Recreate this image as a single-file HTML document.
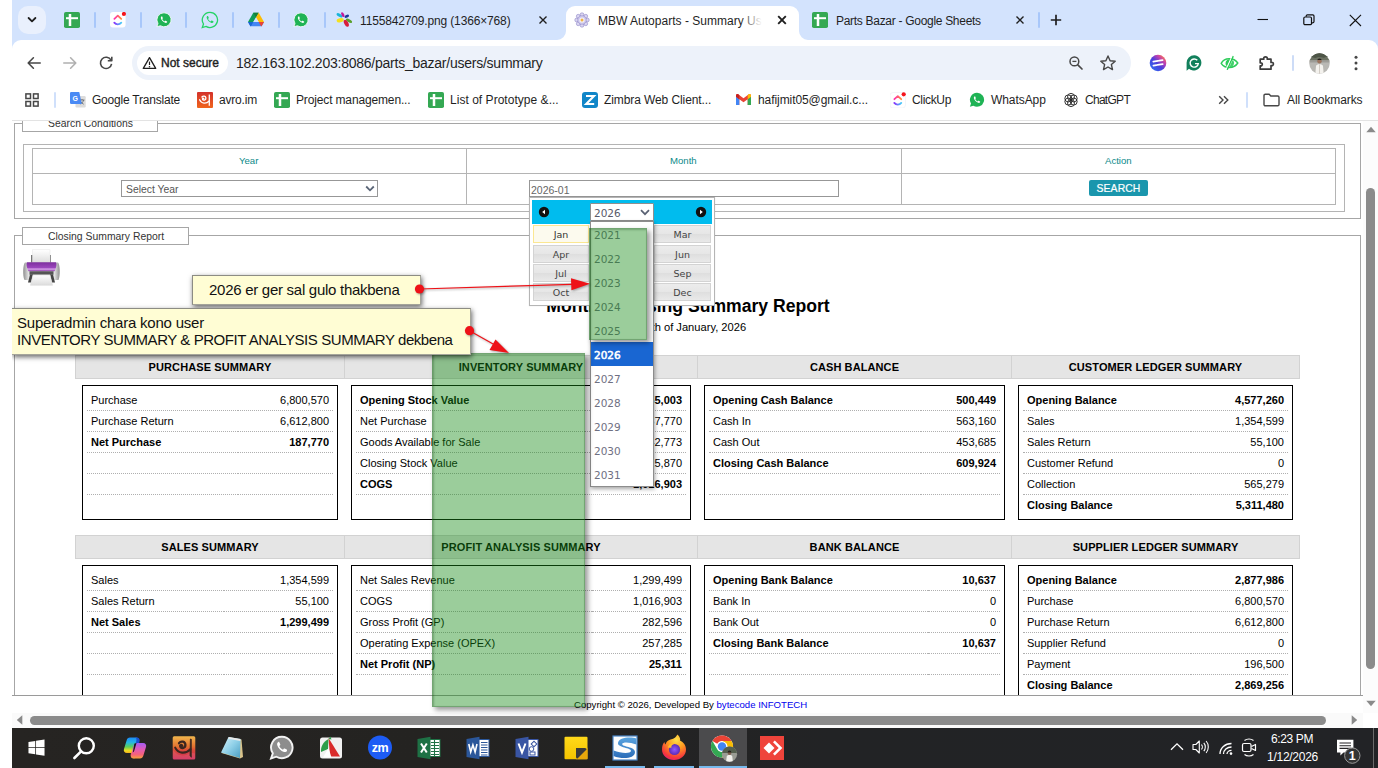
<!DOCTYPE html>
<html lang="en">
<head>
<meta charset="utf-8">
<title>MBW Autoparts - Summary</title>
<style>
*{box-sizing:border-box;margin:0;padding:0}
html,body{width:1378px;height:768px;overflow:hidden;background:#fff}
body{position:relative;font-family:"Liberation Sans",Arial,sans-serif;color:#000}
.a{position:absolute}
.t{position:absolute;white-space:nowrap;line-height:1}
/* ---------- browser chrome ---------- */
#tabbar{left:12px;top:0;width:1366px;height:52px;background:#d3e3fd}
#toolbar{left:12px;top:40px;width:1366px;height:80px;background:#fff;border-radius:9px 9px 0 0}
#chromeline{left:12px;top:120px;width:1366px;height:1px;background:#e3e3e3}
.ui{font-family:"Liberation Sans",Arial,sans-serif;color:#1f1f1f}
.tsep{position:absolute;top:12px;width:2px;height:16px;background:#a8c7fa;border-radius:1px}
.bm{font-size:12px;color:#1f1f1f;top:94px}
/* ---------- page ---------- */
.fs{border:1px solid #a6a6a6;position:absolute}
.lg{position:absolute;border:1px solid #a6a6a6;background:#fff;font-size:9.5px;color:#333}
.tb{position:absolute;border:1px solid #b4b4b4}
.teal{color:#0c8a8a;font-size:9.6px}
/* summary */
.sh{position:absolute;height:24px;background:#e5e5e5;border:1px solid #d2d2d2;font-weight:bold;font-size:11px;text-align:center;line-height:22px;letter-spacing:.1px;color:#000}
.bx{position:absolute;border:1px solid #000;background:#fff;padding:4px}
.bx table{border-collapse:separate;border-spacing:0;width:100%;font-size:11px}
.bx td{height:21px;padding:0 4px 0 4px;border-bottom:1px dotted #afafaf;vertical-align:middle}
.bx tr:last-child td{border-bottom-color:transparent}
.bx td:last-child{text-align:right}
.bx tr.b td{font-weight:bold}
/* datepicker */
.mb{position:absolute;width:56px;height:18px;border:1px solid #d3d3d3;background:linear-gradient(#ececec 0%,#e6e6e6 50%,#dedede 51%,#e9e9e9 100%);font-family:"DejaVu Sans",Verdana,sans-serif;font-size:9.5px;color:#444;text-align:center;line-height:17px}
.yo{position:absolute;left:3px;font-family:"DejaVu Sans",Verdana,sans-serif;font-size:10.5px;color:#6f7082;line-height:1}
/* taskbar */
#taskbar{left:12px;top:728px;width:1366px;height:40px;background:#201f1e}
</style>
</head>
<body>
<!-- ======= TAB BAR ======= -->
<div id="tabbar" class="a"></div>
<div id="toolbar" class="a"></div>
<div id="chromeline" class="a"></div>
<!--TABS-->
<!-- tab search button -->
<div class="a" style="left:18px;top:6px;width:28px;height:28px;border-radius:10px;background:#e9f0fd"></div>
<svg class="a" style="left:26px;top:15px" width="12" height="10" viewBox="0 0 12 10"><path d="M2.6 3 L6 6.4 L9.4 3" fill="none" stroke="#1f1f1f" stroke-width="1.8" stroke-linecap="round" stroke-linejoin="round"/></svg>
<!-- pinned: sheets -->
<svg class="a" style="left:64px;top:12px" width="16" height="16" viewBox="0 0 16 16"><rect x="0" y="0" width="16" height="16" rx="1.800" fill="#34a853"/><path d="M6 2 V14" stroke="#fff" stroke-width="2.500" fill="none"/><path d="M2 6.200 H14" stroke="#fff" stroke-width="2" fill="none"/></svg>
<div class="tsep" style="left:94px"></div>
<!-- clickup -->
<svg class="a" style="left:110px;top:12px" width="16" height="16" viewBox="0 0 16 16"><defs><linearGradient id="cu1" x1="0" y1="0" x2="1" y2="0"><stop offset="0" stop-color="#ff2fb0"/><stop offset="1" stop-color="#ff8a3c"/></linearGradient><linearGradient id="cu2" x1="0" y1="0" x2="1" y2="0"><stop offset="0" stop-color="#8930fd"/><stop offset="1" stop-color="#49ccf9"/></linearGradient></defs><rect width="15.600" height="15.600" rx="3" fill="#fff"/><path d="M4.300 10.600 C6.200 12.900 9.400 12.900 11.300 10.600" fill="none" stroke="url(#cu2)" stroke-width="1.800" stroke-linecap="round"/><path d="M4.400 6.800 L7.800 3.700 L11.200 6.800" fill="none" stroke="url(#cu1)" stroke-width="1.800" stroke-linecap="round" stroke-linejoin="round"/><circle cx="13.900" cy="2" r="2.100" fill="#f5141c"/></svg>
<div class="tsep" style="left:140px"></div>
<!-- whatsapp filled -->
<svg class="a" style="left:156px;top:12px" width="16" height="16" viewBox="0 0 16 16"><path d="M8 .8 A7 7 0 1 1 4.3 13.7 L.9 14.8 L2 11.5 A7 7 0 0 1 8 .8Z" fill="#1fb355" stroke="#fff" stroke-width=".8"/><path d="M5.6 4.4 c-.5.3-.9 1-.7 1.9 .5 2 2.300 3.800 4.300 4.500 .8.300 1.600-.1 1.900-.6 .2-.4.1-.7-.1-.8 l-1.300-.7 c-.3-.1-.5 0-.7.200 l-.4.500 c-1-.4-1.900-1.300-2.400-2.300 l.5-.5 c.2-.2.200-.4.100-.7 l-.6-1.300 c-.1-.2-.4-.3-.6-.2z" fill="#fff"/></svg>
<div class="tsep" style="left:185px"></div>
<!-- whatsapp outline -->
<svg class="a" style="left:201px;top:11px" width="18" height="18" viewBox="0 0 18 18"><path d="M9 1.300 A7.600 7.600 0 1 1 5 15.400 L1.300 16.600 L2.500 13 A7.600 7.600 0 0 1 9 1.300Z" fill="none" stroke="#25d366" stroke-width="1.300"/><path d="M6.400 5 c-.5.300-.9 1.100-.7 2 .6 2.200 2.500 4.100 4.700 4.900 .9.300 1.700-.1 2-.7 .2-.4.100-.8-.1-.9 l-1.400-.7 c-.3-.1-.5 0-.7.200 l-.5.600 c-1.100-.5-2.100-1.400-2.600-2.500 l.5-.6 c.2-.2.200-.5.100-.7 l-.6-1.400 c-.1-.3-.4-.3-.7-.2z" fill="#25d366"/></svg>
<div class="tsep" style="left:232px"></div>
<!-- drive -->
<svg class="a" style="left:248px;top:12px" width="16" height="15" viewBox="0 0 16 15"><path d="M5.300 .8 H10.700 L8 5.500 L5.300 10.100 H0Z" fill="#0f9d58"/><path d="M5.300 .8 L8 5.500 L10.700 .8Z" fill="#188038"/><path d="M10.700 .8 L16 10.100 H10.700 L8 5.500Z" fill="#fbbc04"/><path d="M0 10.100 H16 L13.600 14.200 H2.400Z" fill="#4285f4"/><path d="M0 10.100 H5.300 L2.900 14.200 H2.400Z" fill="#1967d2"/><path d="M10.700 10.100 H16 L13.600 14.200 H13.100Z" fill="#ea4335"/><path d="M8 5.500 L5.300 10.100 H10.700Z" fill="#d3e3fd"/></svg>
<div class="tsep" style="left:278px"></div>
<!-- whatsapp filled 2 -->
<svg class="a" style="left:293px;top:12px" width="16" height="16" viewBox="0 0 16 16"><path d="M8 .8 A7 7 0 1 1 4.3 13.7 L.9 14.800 L2 11.500 A7 7 0 0 1 8 .8Z" fill="#1fb355" stroke="#fff" stroke-width=".8"/><path d="M5.600 4.400 c-.5.300-.9 1-.7 1.900 .5 2 2.300 3.800 4.300 4.500 .8.300 1.600-.1 1.900-.6 .2-.4.100-.7-.1-.8 l-1.300-.7 c-.3-.1-.5 0-.7.200 l-.4.500 c-1-.4-1.900-1.300-2.400-2.300 l.5-.5 c.2-.2.200-.4.100-.7 l-.6-1.300 c-.1-.2-.4-.3-.6-.2z" fill="#fff"/></svg>
<div class="tsep" style="left:324px"></div>
<!-- image tab -->
<svg class="a" style="left:336px;top:12px" width="17" height="16" viewBox="0 0 17 16"><ellipse cx="3.500" cy="3.300" rx="3.300" ry="1.500" transform="rotate(30 3.500 3.300)" fill="#19b5d8"/><ellipse cx="6.800" cy="2.600" rx="2.600" ry="1.300" transform="rotate(65 6.800 2.600)" fill="#c2189a"/><ellipse cx="10.800" cy="4.300" rx="2.400" ry="1.400" transform="rotate(-25 10.800 4.300)" fill="#1b3a9a"/><ellipse cx="4.200" cy="8.200" rx="3.600" ry="2.100" transform="rotate(-12 4.200 8.200)" fill="#f5e11c"/><ellipse cx="13" cy="8.800" rx="3.400" ry="1.500" transform="rotate(30 13 8.800)" fill="#5aa02c"/><ellipse cx="10.300" cy="11.300" rx="3.800" ry="2" transform="rotate(62 10.300 11.300)" fill="#d81e3c"/></svg>
<span id="tt1" class="t ui" style="left:360px;top:14.5px;letter-spacing:-0.151px;font-size:12.0px">1155842709.png (1366×768)</span>
<svg class="a" style="left:538px;top:15px" width="10" height="10" viewBox="0 0 10 10"><path d="M1.500 1.500 L8.500 8.500 M8.500 1.500 L1.500 8.500" stroke="#1f1f1f" stroke-width="1.400" fill="none"/></svg>
<!-- active tab -->
<div class="a" style="left:566px;top:6px;width:233px;height:34px;background:#fff;border-radius:9px 9px 0 0"></div>
<svg class="a" style="left:557px;top:31px" width="9" height="9" viewBox="0 0 9 9"><path d="M9 0 V9 H0 A9 9 0 0 0 9 0Z" fill="#fff"/></svg>
<svg class="a" style="left:799px;top:31px" width="9" height="9" viewBox="0 0 9 9"><path d="M0 0 V9 H9 A9 9 0 0 1 0 0Z" fill="#fff"/></svg>
<svg class="a" style="left:574px;top:12px" width="16" height="16" viewBox="0 0 16 16"><g fill="#d9d5f0" stroke="#8f87c7" stroke-width=".6"><circle cx="8" cy="2.700" r="1.900"/><circle cx="8" cy="13.300" r="1.900"/><circle cx="2.700" cy="8" r="1.900"/><circle cx="13.300" cy="8" r="1.900"/><circle cx="4.250" cy="4.250" r="1.900"/><circle cx="11.750" cy="4.250" r="1.900"/><circle cx="4.250" cy="11.750" r="1.900"/><circle cx="11.750" cy="11.750" r="1.900"/></g><circle cx="8" cy="8" r="4.300" fill="#cfcaec" stroke="#9a92cf" stroke-width=".6"/><circle cx="8" cy="8" r="2.600" fill="#f3f1fb"/><circle cx="8" cy="8" r="1.500" fill="#f0b445"/></svg>
<div class="a" style="left:598px;top:10px;width:168px;height:20px;overflow:hidden"><span id="tt2" class="t ui" style="left:0;top:4.5px;letter-spacing:0.016px;font-size:12.0px">MBW Autoparts - Summary User</span><div class="a" style="right:0;top:0;width:26px;height:20px;background:linear-gradient(90deg,rgba(255,255,255,0),#fff 85%)"></div></div>
<svg class="a" style="left:777px;top:15px" width="10" height="10" viewBox="0 0 10 10"><path d="M1.200 1.200 L8.800 8.800 M8.800 1.200 L1.200 8.800" stroke="#1f1f1f" stroke-width="1.900" fill="none"/></svg>
<!-- sheets tab -->
<svg class="a" style="left:812px;top:12px" width="16" height="16" viewBox="0 0 16 16"><rect x="0" y="0" width="16" height="16" rx="1.800" fill="#34a853"/><path d="M6 2 V14" stroke="#fff" stroke-width="2.500" fill="none"/><path d="M2 6.200 H14" stroke="#fff" stroke-width="2" fill="none"/></svg>
<span id="tt3" class="t ui" style="left:836px;top:14.5px;letter-spacing:-0.296px;font-size:12.0px">Parts Bazar - Google Sheets</span>
<svg class="a" style="left:1015px;top:15px" width="10" height="10" viewBox="0 0 10 10"><path d="M1.500 1.500 L8.500 8.500 M8.500 1.500 L1.500 8.500" stroke="#1f1f1f" stroke-width="1.400" fill="none"/></svg>
<div class="tsep" style="left:1038px"></div>
<svg class="a" style="left:1050px;top:14px" width="12" height="12" viewBox="0 0 12 12"><path d="M6 .8 V11.200 M.8 6 H11.200" stroke="#1f1f1f" stroke-width="1.700" fill="none"/></svg>
<!-- window controls -->
<svg class="a" style="left:1257px;top:14px" width="12" height="12" viewBox="0 0 12 12"><path d="M.5 5.500 H11" stroke="#111" stroke-width="1.100"/></svg>
<svg class="a" style="left:1303px;top:14px" width="12" height="12" viewBox="0 0 12 12"><rect x=".8" y="3" width="7.700" height="7.700" rx="1.300" fill="none" stroke="#111" stroke-width="1.200"/><path d="M3.200 2.800 V2 a1.200 1.200 0 0 1 1.200-1.200 H9.800 a1.200 1.200 0 0 1 1.200 1.200 V7.600 a1.200 1.200 0 0 1-1.200 1.200 H8.900" fill="none" stroke="#111" stroke-width="1.200"/></svg>
<svg class="a" style="left:1349px;top:14px" width="13" height="13" viewBox="0 0 13 13"><path d="M.8 .8 L12 12 M12 .8 L.8 12" stroke="#111" stroke-width="1.100" fill="none"/></svg>
<!--/TABS-->
<!--TOOL-->
<!-- nav buttons -->
<svg class="a" style="left:26px;top:55px" width="16" height="16" viewBox="0 0 16 16"><path d="M14.200 8 H2.400 M7.400 2.800 L2.200 8 L7.400 13.200" fill="none" stroke="#474747" stroke-width="1.600" stroke-linecap="round" stroke-linejoin="round"/></svg>
<svg class="a" style="left:62px;top:55px" width="16" height="16" viewBox="0 0 16 16"><path d="M1.800 8 H13.600 M8.600 2.800 L13.800 8 L8.600 13.200" fill="none" stroke="#b0b0b0" stroke-width="1.600" stroke-linecap="round" stroke-linejoin="round"/></svg>
<svg class="a" style="left:98px;top:55px" width="16" height="16" viewBox="0 0 16 16"><path d="M13 5.200 A5.600 5.600 0 1 0 13.600 8.800" fill="none" stroke="#474747" stroke-width="1.600"/><path d="M13.800 1.800 V5.800 H9.800" fill="none" stroke="#474747" stroke-width="1.600" stroke-linejoin="round"/></svg>
<!-- omnibox -->
<div class="a" style="left:132px;top:46px;width:999px;height:34px;border-radius:17px;background:#edf2fa"></div>
<div class="a" style="left:137px;top:51px;width:91px;height:24px;border-radius:12px;background:#fff"></div>
<svg class="a" style="left:142px;top:56px" width="15" height="14" viewBox="0 0 15 14"><path d="M7.500 1.600 L13.700 12.400 H1.300Z" fill="none" stroke="#1f1f1f" stroke-width="1.300" stroke-linejoin="round"/><path d="M7.500 5.600 V9" stroke="#1f1f1f" stroke-width="1.200"/><circle cx="7.500" cy="10.700" r=".8" fill="#1f1f1f"/></svg>
<span id="ns" class="t ui" style="left:161px;top:57px;font-weight:normal;-webkit-text-stroke:.4px #1f1f1f;color:#1f1f1f;letter-spacing:-0.003px;font-size:12.0px">Not secure</span>
<span id="url" class="t ui" style="left:236px;top:56px;color:#1f1f1f;letter-spacing:-0.24px;font-size:14.0px">182.163.102.203:8086/parts_bazar/users/summary</span>
<svg class="a" style="left:1068px;top:55px" width="16" height="16" viewBox="0 0 16 16"><circle cx="6.400" cy="6.400" r="4.400" fill="none" stroke="#474747" stroke-width="1.500"/><path d="M9.800 9.800 L14 14" stroke="#474747" stroke-width="1.700" stroke-linecap="round"/><path d="M4.400 6.400 H8.400" stroke="#474747" stroke-width="1.300"/></svg>
<svg class="a" style="left:1099px;top:54px" width="18" height="18" viewBox="0 0 18 18"><path d="M9 2 L11.100 6.700 L16.200 7.200 L12.400 10.600 L13.500 15.600 L9 13 L4.500 15.600 L5.600 10.600 L1.800 7.200 L6.900 6.700Z" fill="none" stroke="#474747" stroke-width="1.400" stroke-linejoin="round"/></svg>
<!-- extensions -->
<svg class="a" style="left:1149px;top:54px" width="18" height="18" viewBox="0 0 18 18"><defs><linearGradient id="g1" x1=".1" y1=".9" x2=".9" y2=".1"><stop offset="0" stop-color="#2f6af0"/><stop offset=".45" stop-color="#4a3fdc"/><stop offset=".75" stop-color="#c040b0"/><stop offset="1" stop-color="#ff7a4a"/></linearGradient></defs><circle cx="9" cy="9" r="8.300" fill="url(#g1)"/><path d="M4.300 7.600 L9 6.900 M10.200 6.700 L13.600 6.200 M4.400 11.600 L7.400 11.100 M8.600 10.900 L13.700 10.100" stroke="#fff" stroke-width="1.700" stroke-linecap="round"/></svg>
<svg class="a" style="left:1185px;top:54px" width="18" height="18" viewBox="0 0 18 18"><path d="M9.300 1.200 A7.600 7.600 0 1 1 4 14.700 L1.600 16.700 V9 A7.600 7.600 0 0 1 9.300 1.200Z" fill="#12805c"/><path d="M12.300 6.300 A4.100 4.100 0 1 0 13.300 9.600 H10" fill="none" stroke="#fff" stroke-width="1.400"/></svg>
<svg class="a" style="left:1220px;top:54px" width="19" height="18" viewBox="0 0 19 18"><path d="M1.200 9.300 C4.500 3.600 13.500 3.200 17.800 9 C14 14.800 5 15 1.200 9.300Z" fill="#fff" stroke="#2ecc5a" stroke-width="1.500" stroke-linejoin="round"/><path d="M5.500 9.200 A4 4 0 0 1 10.500 5.300 L7.200 12.600 A4 4 0 0 1 5.500 9.200Z" fill="#2ecc5a"/><path d="M12.600 6 A4 4 0 0 1 9.500 13 Z" fill="#2ecc5a" opacity=".9"/><path d="M13 2.600 L7.400 15.200" stroke="#2ecc5a" stroke-width="1.500" stroke-linecap="round"/><path d="M11.800 2.400 L6.200 15" stroke="#fff" stroke-width="1"/></svg>
<svg class="a" style="left:1258px;top:54px" width="18" height="18" viewBox="0 0 18 18"><path d="M2.200 5.200 H5.800 C5 2 10 2 9.200 5.200 H13 V8.400 C16.200 7.600 16.200 12.400 13 11.600 V15.200 H2.200 V11.800 C5 12.500 5 8.200 2.200 8.900Z" fill="none" stroke="#3c3c3c" stroke-width="1.700" stroke-linejoin="round"/></svg>
<div class="a" style="left:1292px;top:55px;width:2px;height:16px;background:#cddcf7;border-radius:1px"></div>
<svg class="a" style="left:1309px;top:53px" width="21" height="21" viewBox="0 0 21 21"><defs><clipPath id="cpa"><circle cx="10.500" cy="10.500" r="10.200"/></clipPath></defs><g clip-path="url(#cpa)"><rect width="21" height="21" fill="#b9b8b4"/><rect y="0" width="21" height="7.500" fill="#6c7263"/><path d="M0 5 C3 3 5 6 8 4.500 C11 3 14 6 17 4 C19 3 20 5 21 4.500 V0 H0Z" fill="#4d5547"/><rect y="7.500" width="21" height="2" fill="#9d9c97"/><path d="M6.300 21 L7 13 C7.400 10.800 13.600 10.800 14 13 L14.700 21Z" fill="#f4f2ee"/><path d="M10.500 11.500 V21" stroke="#c9c3bb" stroke-width=".8"/><circle cx="10.500" cy="8.300" r="2.200" fill="#9a7560"/><path d="M8.200 7.900 a2.300 2.300 0 0 1 4.600 0 l-.4-.9 h-3.800z" fill="#231f1c"/></g></svg>
<svg class="a" style="left:1353px;top:54px" width="6" height="18" viewBox="0 0 6 18"><circle cx="3" cy="3.200" r="1.500" fill="#474747"/><circle cx="3" cy="9" r="1.500" fill="#474747"/><circle cx="3" cy="14.800" r="1.500" fill="#474747"/></svg>

<!-- bookmarks bar -->
<svg class="a" style="left:25px;top:93px" width="14" height="14" viewBox="0 0 14 14"><g fill="none" stroke="#474747" stroke-width="1.500"><rect x=".9" y=".9" width="4.600" height="4.600"/><rect x="8.500" y=".9" width="4.600" height="4.600"/><rect x=".9" y="8.500" width="4.600" height="4.600"/><rect x="8.500" y="8.500" width="4.600" height="4.600"/></g></svg>
<div class="a" style="left:54px;top:92px;width:2px;height:16px;background:#d0e0fb;border-radius:1px"></div>
<!-- google translate -->
<svg class="a" style="left:70px;top:92px" width="16" height="16" viewBox="0 0 16 16"><rect x="5.500" y="4" width="10.200" height="11.500" rx="1.200" fill="#dcdcdc"/><path d="M9.500 8 h5 M12 7 v1 M10.300 12 c2-1 3-2.500 3.300-4 M10.800 9.500 c.6 1.200 1.600 2.100 2.900 2.700" stroke="#5f6368" stroke-width=".8" fill="none"/><path d="M1.200 0 H9.300 L11.800 12 H1.200 A1.200 1.200 0 0 1 0 10.800 V1.200 A1.200 1.200 0 0 1 1.200 0Z" fill="#4a8af4"/><text x="2.400" y="8.600" font-family="Liberation Sans,sans-serif" font-size="7" font-weight="bold" fill="#fff">G</text></svg>
<span id="b1" class="t bm" style="left:92px;letter-spacing:-0.212px;font-size:12.0px">Google Translate</span>
<!-- avro -->
<svg class="a" style="left:197px;top:92px" width="16" height="16" viewBox="0 0 16 16"><defs><linearGradient id="gav" x1="0" y1="0" x2="0" y2="1"><stop offset="0" stop-color="#d3312b"/><stop offset="1" stop-color="#f0651c"/></linearGradient></defs><rect width="16" height="16" rx="1" fill="url(#gav)"/><path d="M12.300 2.600 V13.800" fill="none" stroke="#fff" stroke-width="1.300"/><path d="M6.800 6.600 C6.100 5.800 5.100 6.500 5.600 7.400 C6.300 8.800 9.100 8.100 8.900 6 C8.800 4 6.200 3.400 4.900 5" fill="none" stroke="#fff" stroke-width="1.300" stroke-linecap="round"/><path d="M2.600 7.800 C4.400 11.800 9.200 12.300 12.200 9" fill="none" stroke="#fff" stroke-width="1.300" stroke-linecap="round"/></svg>
<span id="b2" class="t bm" style="left:219px;letter-spacing:-0.192px;font-size:12.0px">avro.im</span>
<svg class="a" style="left:274px;top:92px" width="16" height="16" viewBox="0 0 16 16"><rect x="0" y="0" width="16" height="16" rx="1.800" fill="#34a853"/><path d="M6 2 V14" stroke="#fff" stroke-width="2.500" fill="none"/><path d="M2 6.200 H14" stroke="#fff" stroke-width="2" fill="none"/></svg>
<span id="b3" class="t bm" style="left:296px;letter-spacing:-0.145px;font-size:12.0px">Project managemen...</span>
<svg class="a" style="left:428px;top:92px" width="16" height="16" viewBox="0 0 16 16"><rect x="0" y="0" width="16" height="16" rx="1.800" fill="#34a853"/><path d="M6 2 V14" stroke="#fff" stroke-width="2.500" fill="none"/><path d="M2 6.200 H14" stroke="#fff" stroke-width="2" fill="none"/></svg>
<span id="b4" class="t bm" style="left:450px;letter-spacing:0.031px;font-size:12.0px">List of Prototype &amp;...</span>
<!-- zimbra -->
<svg class="a" style="left:582px;top:92px" width="16" height="16" viewBox="0 0 16 16"><rect width="16" height="16" rx="3" fill="#1186c8"/><path d="M4 4 H12 L4.200 12 H12.200" fill="none" stroke="#fff" stroke-width="2.100" stroke-linejoin="miter"/></svg>
<span id="b5" class="t bm" style="left:604px;letter-spacing:-0.095px;font-size:12.0px">Zimbra Web Client...</span>
<!-- gmail -->
<svg class="a" style="left:736px;top:94px" width="15" height="12" viewBox="0 0 15 12"><path d="M0 1.500 V11 H3.300 V5.200 L7.500 8.300 L11.700 5.200 V11 H15 V1.500 C15 .2 13.500 -.4 12.500 .4 L7.500 4.200 L2.500 .4 C1.500 -.4 0 .2 0 1.500Z" fill="#ea4335"/><path d="M0 1.500 V11 H3.300 V5.200 L0 2.700Z" fill="#4285f4"/><path d="M15 1.500 V11 H11.700 V5.200 L15 2.700Z" fill="#34a853"/><path d="M0 1.500 V2.700 L3.300 5.200 V1 L2.500 .4 C1.500 -.4 0 .2 0 1.500Z" fill="#c5221f"/><path d="M15 1.500 V2.700 L11.700 5.200 V1 L12.500 .4 C13.500 -.4 15 .2 15 1.500Z" fill="#fbbc04"/></svg>
<span id="b6" class="t bm" style="left:758px;letter-spacing:-0.074px;font-size:12.0px">hafijmit05@gmail.c...</span>
<!-- clickup -->
<svg class="a" style="left:890px;top:92px" width="16" height="16" viewBox="0 0 16 16"><rect y=".5" width="15.500" height="15.500" rx="3" fill="#fff" stroke="#eceff5" stroke-width=".6"/><path d="M4.300 10.900 C6.200 13.200 9.400 13.200 11.300 10.900" fill="none" stroke="url(#cu2)" stroke-width="1.800" stroke-linecap="round"/><path d="M4.400 7.200 L7.800 4.100 L11.200 7.200" fill="none" stroke="url(#cu1)" stroke-width="1.800" stroke-linecap="round" stroke-linejoin="round"/><circle cx="13.700" cy="2.300" r="2.100" fill="#f5141c"/></svg>
<span id="b7" class="t bm" style="left:912px;letter-spacing:-0.335px;font-size:12.0px">ClickUp</span>
<svg class="a" style="left:969px;top:92px" width="16" height="16" viewBox="0 0 16 16"><path d="M8 .8 A7 7 0 1 1 4.300 13.700 L.9 14.800 L2 11.500 A7 7 0 0 1 8 .8Z" fill="#1fb355"/><path d="M5.600 4.400 c-.5.300-.9 1-.7 1.900 .5 2 2.300 3.800 4.300 4.500 .8.300 1.600-.1 1.900-.6 .2-.4.100-.7-.1-.8 l-1.300-.7 c-.3-.1-.5 0-.7.200 l-.4.500 c-1-.4-1.900-1.300-2.400-2.300 l.5-.5 c.2-.2.200-.4.100-.7 l-.6-1.300 c-.1-.2-.4-.3-.6-.2z" fill="#fff"/></svg>
<span id="b8" class="t bm" style="left:991px;letter-spacing:-0.076px;font-size:12.0px">WhatsApp</span>
<!-- chatgpt -->
<svg class="a" style="left:1063px;top:92px" width="16" height="16" viewBox="0 0 16 16"><g fill="none" stroke="#2b2b2b" stroke-width=".95"><circle cx="10.68" cy="9.55" r="3.500"/><circle cx="8.00" cy="11.10" r="3.500"/><circle cx="5.32" cy="9.55" r="3.500"/><circle cx="5.32" cy="6.45" r="3.500"/><circle cx="8.00" cy="4.90" r="3.500"/><circle cx="10.68" cy="6.45" r="3.500"/></g></svg>
<span id="b9" class="t bm" style="left:1085px;letter-spacing:-0.717px;font-size:12.0px">ChatGPT</span>
<svg class="a" style="left:1218px;top:95px" width="11" height="10" viewBox="0 0 11 10"><path d="M1.200 1.200 L5 5 L1.200 8.800 M6 1.200 L9.800 5 L6 8.800" fill="none" stroke="#474747" stroke-width="1.400"/></svg>
<div class="a" style="left:1246px;top:92px;width:2px;height:16px;background:#d0e0fb;border-radius:1px"></div>
<svg class="a" style="left:1263px;top:93px" width="17" height="14" viewBox="0 0 17 14"><path d="M1 2.500 A1.300 1.300 0 0 1 2.300 1.200 H6.200 L7.800 3 H14.700 A1.300 1.300 0 0 1 16 4.300 V11.500 A1.300 1.300 0 0 1 14.700 12.800 H2.300 A1.300 1.300 0 0 1 1 11.500Z" fill="none" stroke="#474747" stroke-width="1.400" stroke-linejoin="round"/></svg>
<span id="b10" class="t bm" style="left:1287px;letter-spacing:-0.091px;font-size:12.0px">All Bookmarks</span>
<!--/TOOL-->

<!-- PAGE -->
<div id="page" class="a" style="left:0;top:0;width:1378px;height:713px;clip-path:inset(121px 12px 0 12px)">
<!-- fieldset 1 -->
<div class="fs" style="left:14px;top:123px;width:1347px;height:96px"></div>
<div class="lg" style="left:22px;top:114px;width:136px;height:18px"><span id="lg1" class="t" style="left:25px;top:4px;font-size:10.4px">Search Conditions</span></div>
<div class="tb" style="left:23px;top:144px;width:1322px;height:68px"></div>
<div class="tb" style="left:32px;top:148px;width:1304px;height:57px"></div>
<div class="a" style="left:32px;top:173px;width:1304px;height:1px;background:#b4b4b4"></div>
<div class="a" style="left:466px;top:148px;width:1px;height:57px;background:#b4b4b4"></div>
<div class="a" style="left:901px;top:148px;width:1px;height:57px;background:#b4b4b4"></div>
<span class="t teal" style="left:239px;top:156px" id="th1">Year</span>
<span class="t teal" style="left:670px;top:156px" id="th2">Month</span>
<span class="t teal" style="left:1105px;top:156px" id="th3">Action</span>
<div class="a" style="left:121px;top:180px;width:257px;height:17px;border:1px solid #979797;background:#fff"><span class="t" style="left:4px;top:4px;font-size:10.4px;color:#555">Select Year</span><svg class="a" style="left:242.5px;top:3.5px" width="10" height="8" viewBox="0 0 10 8"><path d="M1.200 1.500 L5 5.300 L8.800 1.500" fill="none" stroke="#5a6577" stroke-width="1.800"/></svg></div>
<div class="a" style="left:529px;top:180px;width:310px;height:17px;border:1px solid #979797;background:#fff"><span class="t" style="left:1px;top:4px;font-size:10.5px;color:#666">2026-01</span></div>
<div class="a" style="left:1089px;top:180px;width:59px;height:16px;background:#1a96ad;border-radius:2px;color:#fff;font-size:10.4px;text-align:center;line-height:17px;letter-spacing:.1px;-webkit-text-stroke:.2px #fff">SEARCH</div>
<!-- fieldset 2 -->
<div class="fs" style="left:14px;top:235px;width:1347px;height:521px"></div>
<div class="lg" style="left:22px;top:227px;width:167px;height:18px"><span id="lg2" class="t" style="left:25px;top:4px;font-size:10.4px">Closing Summary Report</span></div>
<!-- printer -->
<svg class="a" style="left:22px;top:249px" width="39" height="38" viewBox="0 0 39 38">
<defs><linearGradient id="pp" x1="0" y1="0" x2="0" y2="1"><stop offset="0" stop-color="#7d2f9e"/><stop offset=".6" stop-color="#9b47bd"/><stop offset=".75" stop-color="#d9a5ea"/><stop offset="1" stop-color="#8a35a8"/></linearGradient>
<linearGradient id="pg" x1="0" y1="0" x2="1" y2="0"><stop offset="0" stop-color="#8e8e8e"/><stop offset=".15" stop-color="#e6e6e6"/><stop offset=".5" stop-color="#c9c9c9"/><stop offset=".85" stop-color="#e6e6e6"/><stop offset="1" stop-color="#8e8e8e"/></linearGradient>
<linearGradient id="pw" x1="0" y1="0" x2="0" y2="1"><stop offset="0" stop-color="#fff"/><stop offset="1" stop-color="#dcdcdc"/></linearGradient></defs>
<rect x="9" y="6" width="2" height="8" fill="#777"/><rect x="27" y="6" width="2" height="8" fill="#777"/>
<rect x="10.500" y=".8" width="17.500" height="13" fill="url(#pw)" stroke="#e4e4e4" stroke-width=".5"/>
<path d="M3 13.500 H36 C38 15 38.500 27 36.500 31 L31 31 L29 24 H10 L8 31 H2.500 C.5 27 1 15 3 13.500Z" fill="url(#pg)"/>
<path d="M5 13.300 H34 C35 15 34 20 32.500 22.300 H6.500 C5 20 4 15 5 13.300Z" fill="url(#pp)"/>
<rect x="7.500" y="22.300" width="24" height="3.400" fill="#555"/>
<path d="M8 25.500 H11 L9 33.500 H6Z" fill="#444"/><path d="M31 25.500 H28 L30 33.500 H33Z" fill="#444"/>
<path d="M11 26 H28 L30.500 36.300 H8.500Z" fill="url(#pw)" stroke="#d9d9d9" stroke-width=".5"/>
</svg>
<!-- title -->
<div id="ttl" class="t" style="left:388px;top:298px;width:600px;text-align:center;font-size:17.6px;font-weight:bold">Monthly Closing Summary Report</div>
<div id="sub" class="t" style="left:388px;top:322px;width:600px;text-align:center;font-size:11.15px">Month of January, 2026</div>
<!--SUMMARY-->
<div class="sh" style="left:75px;top:355px;width:270px">PURCHASE SUMMARY</div>
<div class="sh" style="left:344px;top:355px;width:354px">INVENTORY SUMMARY</div>
<div class="sh" style="left:697px;top:355px;width:315px">CASH BALANCE</div>
<div class="sh" style="left:1011px;top:355px;width:289px">CUSTOMER LEDGER SUMMARY</div>
<div class="bx" style="left:82px;top:385px;width:256px;height:135px"><table><tr><td>Purchase</td><td>6,800,570</td></tr><tr><td>Purchase Return</td><td>6,612,800</td></tr><tr class="b"><td>Net Purchase</td><td>187,770</td></tr><tr><td>&nbsp;</td><td></td></tr><tr><td>&nbsp;</td><td></td></tr><tr><td>&nbsp;</td><td></td></tr></table></div>
<div class="bx" style="left:351px;top:385px;width:340px;height:135px"><table><tr class="b"><td>Opening Stock Value</td><td>4,155,003</td></tr><tr><td>Net Purchase</td><td>187,770</td></tr><tr><td>Goods Available for Sale</td><td>4,342,773</td></tr><tr><td>Closing Stock Value</td><td>3,325,870</td></tr><tr class="b"><td>COGS</td><td>1,016,903</td></tr><tr><td>&nbsp;</td><td></td></tr></table></div>
<div class="bx" style="left:704px;top:385px;width:301px;height:135px"><table><tr class="b"><td>Opening Cash Balance</td><td>500,449</td></tr><tr><td>Cash In</td><td>563,160</td></tr><tr><td>Cash Out</td><td>453,685</td></tr><tr class="b"><td>Closing Cash Balance</td><td>609,924</td></tr><tr><td>&nbsp;</td><td></td></tr><tr><td>&nbsp;</td><td></td></tr></table></div>
<div class="bx" style="left:1018px;top:385px;width:275px;height:135px"><table><tr class="b"><td>Opening Balance</td><td>4,577,260</td></tr><tr><td>Sales</td><td>1,354,599</td></tr><tr><td>Sales Return</td><td>55,100</td></tr><tr><td>Customer Refund</td><td>0</td></tr><tr><td>Collection</td><td>565,279</td></tr><tr class="b"><td>Closing Balance</td><td>5,311,480</td></tr></table></div>
<div class="sh" style="left:75px;top:535px;width:270px">SALES SUMMARY</div>
<div class="sh" style="left:344px;top:535px;width:354px">PROFIT ANALYSIS SUMMARY</div>
<div class="sh" style="left:697px;top:535px;width:315px">BANK BALANCE</div>
<div class="sh" style="left:1011px;top:535px;width:289px">SUPPLIER LEDGER SUMMARY</div>
<div class="bx" style="left:82px;top:565px;width:256px;height:135px"><table><tr><td>Sales</td><td>1,354,599</td></tr><tr><td>Sales Return</td><td>55,100</td></tr><tr class="b"><td>Net Sales</td><td>1,299,499</td></tr><tr><td>&nbsp;</td><td></td></tr><tr><td>&nbsp;</td><td></td></tr><tr><td>&nbsp;</td><td></td></tr></table></div>
<div class="bx" style="left:351px;top:565px;width:340px;height:135px"><table><tr><td>Net Sales Revenue</td><td>1,299,499</td></tr><tr><td>COGS</td><td>1,016,903</td></tr><tr><td>Gross Profit (GP)</td><td>282,596</td></tr><tr><td>Operating Expense (OPEX)</td><td>257,285</td></tr><tr class="b"><td>Net Profit (NP)</td><td>25,311</td></tr><tr><td>&nbsp;</td><td></td></tr></table></div>
<div class="bx" style="left:704px;top:565px;width:301px;height:135px"><table><tr class="b"><td>Opening Bank Balance</td><td>10,637</td></tr><tr><td>Bank In</td><td>0</td></tr><tr><td>Bank Out</td><td>0</td></tr><tr class="b"><td>Closing Bank Balance</td><td>10,637</td></tr><tr><td>&nbsp;</td><td></td></tr><tr><td>&nbsp;</td><td></td></tr></table></div>
<div class="bx" style="left:1018px;top:565px;width:275px;height:135px"><table><tr class="b"><td>Opening Balance</td><td>2,877,986</td></tr><tr><td>Purchase</td><td>6,800,570</td></tr><tr><td>Purchase Return</td><td>6,612,800</td></tr><tr><td>Supplier Refund</td><td>0</td></tr><tr><td>Payment</td><td>196,500</td></tr><tr class="b"><td>Closing Balance</td><td>2,869,256</td></tr></table></div>
<!--/SUMMARY-->
</div>

<!--REST-->
<!-- footer (fixed) -->
<div class="a" style="left:12px;top:695px;width:1351px;height:18px;background:#fff;border-top:1px solid #9a9a9a"></div>
<div id="ft" class="t" style="left:574px;top:700px;font-size:9.6px;color:#000">Copyright © 2026, Developed By <span style="color:#0000ee">bytecode INFOTECH</span></div>
<!-- vertical scrollbar -->
<div class="a" style="left:1363px;top:121px;width:15px;height:592px;background:#fcfcfc"></div>
<svg class="a" style="left:1366px;top:126px" width="10" height="7" viewBox="0 0 10 7"><path d="M.3 6.300 L5 .8 L9.700 6.300Z" fill="#8a8a8a"/></svg>
<div class="a" style="left:1366px;top:188px;width:9px;height:481px;border-radius:4.500px;background:#8b8b8b"></div>
<svg class="a" style="left:1366px;top:700px" width="10" height="7" viewBox="0 0 10 7"><path d="M.3 .7 L5 6.200 L9.700 .7Z" fill="#8a8a8a"/></svg>
<!-- horizontal scrollbar -->
<div class="a" style="left:12px;top:713px;width:1351px;height:15px;background:#fafafa"></div>
<svg class="a" style="left:16px;top:715px" width="7" height="10" viewBox="0 0 7 10"><path d="M6.300 .3 L.8 5 L6.300 9.700Z" fill="#8a8a8a"/></svg>
<div class="a" style="left:30px;top:716px;width:1296px;height:9px;border-radius:4.500px;background:#8b8b8b"></div>
<svg class="a" style="left:1351px;top:715px" width="7" height="10" viewBox="0 0 7 10"><path d="M.7 .3 L6.200 5 L.7 9.700Z" fill="#8a8a8a"/></svg>

<!-- ======= datepicker ======= -->
<div class="a" style="left:529px;top:197px;width:186px;height:109px;background:#fff;border:1px solid #b5b5b5;box-shadow:0 0 1px rgba(0,0,0,.15)"></div>
<div class="a" style="left:532px;top:200px;width:180px;height:24px;background:#00bcee"></div>
<svg class="a" style="left:537.5px;top:205.500px" width="12" height="12" viewBox="0 0 12 12"><circle cx="6" cy="6" r="5.200" fill="#111"/><path d="M7 3.800 L4.200 6 L7 8.200Z" fill="#fff"/></svg>
<svg class="a" style="left:694.500px;top:205.500px" width="12" height="12" viewBox="0 0 12 12"><circle cx="6" cy="6" r="5.200" fill="#111"/><path d="M5 3.800 L7.800 6 L5 8.200Z" fill="#fff"/></svg>
<div class="mb" style="left:533px;top:225px;border-color:#fbe792;background:#fcfaee;color:#333">Jan</div>
<div class="mb" style="left:594px;top:225px">Feb</div>
<div class="mb" style="left:654px;top:225px;width:57px">Mar</div>
<div class="mb" style="left:533px;top:245px">Apr</div>
<div class="mb" style="left:594px;top:245px">May</div>
<div class="mb" style="left:654px;top:245px;width:57px">Jun</div>
<div class="mb" style="left:533px;top:264px">Jul</div>
<div class="mb" style="left:594px;top:264px">Aug</div>
<div class="mb" style="left:654px;top:264px;width:57px">Sep</div>
<div class="mb" style="left:533px;top:283px">Oct</div>
<div class="mb" style="left:594px;top:283px">Nov</div>
<div class="mb" style="left:654px;top:283px;width:57px">Dec</div>
<!-- year select -->
<div class="a" style="left:590px;top:203px;width:64px;height:18px;background:#fff;border:1px solid #8f8f8f;border-radius:1px"><span class="t" style="left:3px;top:4px;font-family:'DejaVu Sans',Verdana,sans-serif;font-size:10.500px;color:#5a5a6a">2026</span><svg class="a" style="left:49px;top:5px" width="10" height="7" viewBox="0 0 10 7"><path d="M1 1.200 L5 5.200 L9 1.200" fill="none" stroke="#5a6273" stroke-width="1.700"/></svg></div>
<!-- dropdown list -->
<div class="a" style="left:590px;top:221px;width:64px;height:266px;background:#fff;border:1px solid #8d8d8d;box-shadow:1px 2px 4px rgba(0,0,0,.35)">
<span class="yo" style="top:8px">2021</span>
<span class="yo" style="top:32px">2022</span>
<span class="yo" style="top:56px">2023</span>
<span class="yo" style="top:80px">2024</span>
<span class="yo" style="top:104px">2025</span>
<div class="a" style="left:0;top:120px;width:62px;height:24px;background:#1966d2"></div>
<span class="yo" style="top:128px;color:#fff;-webkit-text-stroke:.55px #fff">2026</span>
<span class="yo" style="top:152px">2027</span>
<span class="yo" style="top:176px">2028</span>
<span class="yo" style="top:200px">2029</span>
<span class="yo" style="top:224px">2030</span>
<span class="yo" style="top:248px">2031</span>
</div>

<!-- ======= annotation overlays ======= -->
<div class="a" style="left:589px;top:228px;width:58px;height:112px;background:rgba(23,139,23,.43);border:1px solid rgba(30,80,30,.32);box-shadow:3px 3px 5px rgba(0,0,0,.4),inset 1px 1px 2px rgba(20,70,20,.3)"></div>
<div class="a" style="left:432px;top:353px;width:153px;height:354px;background:rgba(23,139,23,.43);border:1px solid rgba(30,80,30,.32);box-shadow:3px 3px 5px rgba(0,0,0,.4),inset 1px 1px 2px rgba(20,70,20,.3)"></div>
<!-- callout 1 -->
<div class="a" style="left:192px;top:275px;width:229px;height:30px;background:#fffdd4;border:1px solid #8c8c84;border-bottom-color:#a5a59a;border-right-color:#a5a59a;box-shadow:1px 2px 5px rgba(0,0,0,.6)"><span id="c1" class="t" style="left:16px;top:6px;color:#111;letter-spacing:-0.275px;font-size:15.0px">2026 er ger sal gulo thakbena</span></div>
<!-- callout 2 -->
<div class="a" style="left:12px;top:308px;width:459px;height:47px;background:#fffdd4;border:1px solid #8c8c84;border-bottom-color:#a5a59a;border-right-color:#a5a59a;border-left:none;box-shadow:1px 2px 5px rgba(0,0,0,.6);clip-path:inset(-12px -12px -12px 0)"><span id="c2a" class="t" style="left:5px;top:6px;color:#111;letter-spacing:-0.216px;font-size:15.0px">Superadmin chara kono user</span><span id="c2b" class="t" style="left:5px;top:23px;color:#111;letter-spacing:-0.435px;font-size:15.0px">INVENTORY SUMMARY &amp; PROFIT ANALYSIS SUMMARY dekbena</span></div>
<!-- arrows -->
<svg class="a" style="left:400px;top:270px;filter:drop-shadow(1px 1px 1px rgba(0,0,0,.35))" width="200" height="95" viewBox="400 270 200 95">
<path d="M419.500 289 L572 284.300" stroke="#ee1218" stroke-width="1.200" fill="none"/>
<circle cx="419.500" cy="289" r="4.600" fill="#ee1218"/>
<path d="M590 283.700 L571 278.300 L571.400 290.300Z" fill="#ee1218"/>
<path d="M469.500 330.700 L494 344.600" stroke="#ee1218" stroke-width="1.200" fill="none"/>
<circle cx="469.500" cy="330.700" r="4.600" fill="#ee1218"/>
<path d="M509 353 L495.500 339.500 L489.500 350Z" fill="#ee1218"/>
</svg>
<!--/REST-->
<!-- TASKBAR -->
<!--TASK-->
<div id="taskbar" class="a" style="background:linear-gradient(90deg,#262422 0%,#242321 30%,#222325 60%,#222326 100%)"></div>
<!-- windows -->
<svg class="a" style="left:27.5px;top:739px" width="17" height="17.500" viewBox="0 0 18 18"><path d="M.5 2.900 L7.700 1.800 V8.500 H.5Z M8.500 1.650 L17.500 .3 V8.500 H8.500Z M.5 9.300 H7.700 V16 L.5 14.900Z M8.500 9.300 H17.500 V17.500 L8.500 16.150Z" fill="#fff"/></svg>
<!-- search -->
<svg class="a" style="left:72px;top:735px" width="26" height="26" viewBox="0 0 26 26"><circle cx="14.300" cy="10.800" r="7.500" fill="none" stroke="#fff" stroke-width="2.400"/><path d="M9.100 16.300 L2.400 23" stroke="#fff" stroke-width="2.600" stroke-linecap="round"/></svg>
<!-- copilot -->
<svg class="a" style="left:123px;top:736px" width="24" height="24" viewBox="0 0 24 24"><defs><linearGradient id="cpl1" x1="0" y1="0" x2="0" y2="1"><stop offset="0" stop-color="#1e8cf5"/><stop offset=".3" stop-color="#22b4e8"/><stop offset=".6" stop-color="#5ccf5a"/><stop offset=".85" stop-color="#f2dc1e"/><stop offset="1" stop-color="#f5b01e"/></linearGradient><linearGradient id="cpl2" x1="0" y1="0" x2="0" y2="1"><stop offset="0" stop-color="#a45cf5"/><stop offset=".4" stop-color="#e05ab8"/><stop offset=".75" stop-color="#f5627a"/><stop offset="1" stop-color="#f7a03c"/></linearGradient></defs>
<path d="M11.500 22.400 C9 22.400 7.500 21 7.600 19 L8.200 16 H12Z" fill="#f0602c"/>
<path d="M7 1.600 H13 C15.500 1.600 16.800 3 16 5.500 L13.500 14 C12.800 16.300 11.500 17 9.500 17 H4 C1.500 17 .3 15.300 1 13 L3.600 4.500 C4.200 2.500 5.200 1.600 7 1.600Z" fill="url(#cpl1)"/>
<path d="M12 1.600 H13 C15.500 1.600 17 3 16.600 5.200 L16 7.600 H12.600 L13.400 4.500 C13.700 3 13.300 2 12 1.600Z" fill="#1a50d2"/>
<path d="M17 22.400 H11 C8.500 22.400 7.200 21 8 18.500 L10.500 10 C11.200 7.700 12.500 7 14.500 7 H20 C22.500 7 23.700 8.700 23 11 L20.400 19.500 C19.800 21.500 18.800 22.400 17 22.400Z" fill="url(#cpl2)"/>
<path d="M11.300 7.800 C11.800 7.200 12.600 7 13.500 7 L11.300 14.500 C11 15.500 10.500 16.200 9.800 16.600 Z" fill="#1c1b1a"/></svg>
<!-- avro -->
<svg class="a" style="left:172px;top:736px" width="24" height="24" viewBox="0 0 24 24"><defs><linearGradient id="av2" x1="0" y1="0" x2="0" y2="1"><stop offset="0" stop-color="#f2b64c"/><stop offset=".45" stop-color="#e2702f"/><stop offset=".6" stop-color="#d9493a"/><stop offset="1" stop-color="#d12c5c"/></linearGradient></defs><rect x=".7" y=".3" width="22.600" height="23.300" rx="1.500" fill="url(#av2)"/><path d="M1 14 C6 21 14 20.500 18 16.500 L23 17.500 V22 a1.500 1.500 0 0 1-1.500 1.500 H2.500 A1.500 1.500 0 0 1 1 22Z" fill="#fff" opacity=".09"/><path d="M18.400 3 L19.300 3.300 V21.300 L18 19.500Z" fill="#3a2620" stroke="#3a2620" stroke-width=".8"/><path d="M10.200 9.600 C9.200 8.300 7.600 9.400 8.300 10.800 C9.400 13 13.600 12 13.400 8.800 C13.200 5.400 9 4.400 7 7.200" fill="none" stroke="#3a2620" stroke-width="2.300" stroke-linecap="round"/><path d="M3.200 11.600 C6 17.500 13.500 18.500 18.400 13.200" fill="none" stroke="#3a2620" stroke-width="2.100" stroke-linecap="round"/></svg>
<!-- notepad -->
<svg class="a" style="left:220px;top:736px" width="25" height="24" viewBox="0 0 25 24"><defs><linearGradient id="np" x1="0" y1="0" x2="1" y2="1"><stop offset="0" stop-color="#d8f2fa"/><stop offset=".5" stop-color="#8fd0e8"/><stop offset="1" stop-color="#4a9ec2"/></linearGradient></defs><path d="M9 1.500 L21.500 3.500 L23 21 L20 22.500 L1.500 17Z" fill="#d9c38a"/><path d="M8.500 1 L20.500 3 L20 22 L1 16.500Z" fill="url(#np)"/><path d="M9 1 L20.500 3 L20.400 5 L8.200 2.800Z" fill="#e9e9e9"/></svg>
<!-- whatsapp desktop -->
<svg class="a" style="left:269px;top:735px" width="26" height="26" viewBox="0 0 26 26"><path d="M13 1.800 A10.700 10.700 0 1 1 7.400 21.700 L2 23.500 L3.800 18.300 A10.700 10.700 0 0 1 13 1.800Z" fill="#8d8d8d" stroke="#f2f2f2" stroke-width="1.900"/><path d="M9.300 7 c-.8.400-1.400 1.600-1.100 2.900 .8 3.200 3.600 6 6.800 7 1.300.4 2.500-.2 2.900-1 .3-.6.200-1.100-.2-1.300 l-2-1 c-.4-.2-.8-.1-1 .2 l-.7.900 c-1.600-.7-3-2-3.700-3.600 l.8-.8 c.3-.3.300-.7.100-1.100 l-.9-2 c-.2-.4-.6-.5-1-.2z" fill="#fff"/></svg>
<!-- faststone -->
<svg class="a" style="left:319px;top:736px" width="24" height="24" viewBox="0 0 24 24"><rect x="1" y="1.500" width="22" height="21" rx="2.500" fill="#f1f1f1"/><path d="M9.500 2 L21 20.500 H11 Z" fill="#d92b2b"/><path d="M9.500 3 C4 6 1.500 11 2 16 L9 13Z" fill="#2e9e4a"/><path d="M9.500 3 L11.500 .5 L12.500 3.500Z" fill="#2e9e4a"/><path d="M4 21.500 L9.500 12 L12.500 21.500Z" fill="#fff"/></svg>
<!-- zoom -->
<svg class="a" style="left:367px;top:735px" width="26" height="26" viewBox="0 0 26 26"><circle cx="13" cy="12.600" r="12" fill="#1d5cf5"/><text x="13" y="17" text-anchor="middle" font-family="Liberation Sans,sans-serif" font-weight="bold" font-size="12.500" fill="#fff" letter-spacing="-.5">zm</text></svg>
<!-- excel -->
<svg class="a" style="left:417px;top:736px" width="24" height="24" viewBox="0 0 24 24"><rect x="11" y="3.500" width="12" height="17" fill="#fff" stroke="#1e7145" stroke-width="1"/><path d="M14 6.500 H22 M14 9.500 H22 M14 12.500 H22 M14 15.500 H22 M14 18.500 H22 M17.500 4 V20" stroke="#1e7145" stroke-width="1.100"/><path d="M.5 3 L13.500 .8 V23.200 L.5 21Z" fill="#1e7145"/><path d="M4 7.500 L9.800 16.500 M9.800 7.500 L4 16.500" stroke="#fff" stroke-width="2"/></svg>
<!-- word -->
<svg class="a" style="left:466px;top:736px" width="24" height="24" viewBox="0 0 24 24"><rect x="11" y="3.500" width="12" height="17" fill="#fff" stroke="#2b579a" stroke-width="1"/><path d="M15 6.500 H21.500 M15 9 H21.500 M15 11.500 H21.500 M15 14 H21.500 M15 16.500 H21.500 M15 19 H21.500" stroke="#2b579a" stroke-width="1.100"/><path d="M.5 3 L13.500 .8 V23.200 L.5 21Z" fill="#2b579a"/><path d="M2.800 8 L4.700 16 L6.900 9 L9.100 16 L11 8" fill="none" stroke="#fff" stroke-width="1.600"/></svg>
<!-- visio -->
<svg class="a" style="left:515px;top:736px" width="24" height="24" viewBox="0 0 24 24"><rect x="11" y="3.500" width="12" height="17" fill="#fff" stroke="#3955a3" stroke-width="1"/><rect x="17" y="6" width="4" height="4" transform="rotate(45 19 8)" fill="none" stroke="#3955a3" stroke-width="1"/><circle cx="16.500" cy="13" r="2.300" fill="none" stroke="#3955a3" stroke-width="1"/><rect x="15" y="16" width="5" height="3" fill="none" stroke="#3955a3" stroke-width="1"/><path d="M.5 3 L13.500 .8 V23.200 L.5 21Z" fill="#3955a3"/><path d="M3.500 7.500 L7 16.500 L10.500 7.500" fill="none" stroke="#fff" stroke-width="2"/></svg>
<!-- sticky notes -->
<svg class="a" style="left:564px;top:736px" width="24" height="24" viewBox="0 0 24 24"><defs><linearGradient id="sn" x1="0" y1="0" x2="0" y2="1"><stop offset="0" stop-color="#ffd91a"/><stop offset="1" stop-color="#f5c400"/></linearGradient></defs><rect x=".5" y=".7" width="23" height="22.500" rx="1" fill="url(#sn)"/><path d="M23.500 11.500 V23.200 H11.800Z" fill="#e8a80c"/><path d="M12 12 H21 a1.500 1.500 0 0 1 1.500 1.500 L13.500 22.500 a1.500 1.500 0 0 1-1.500-1.500Z" fill="#3a3a3a"/></svg>
<!-- S app -->
<svg class="a" style="left:612px;top:735px" width="26" height="26" viewBox="0 0 26 26"><defs><linearGradient id="sg" x1="0" y1="0" x2="0" y2="1"><stop offset="0" stop-color="#5aa4e0"/><stop offset="1" stop-color="#2a6cb8"/></linearGradient></defs><rect x="1" y="1" width="24" height="24" fill="#fdfdfd" stroke="#4a86c8" stroke-width="1.200"/><path d="M24.400 3.500 C18 1.500 6.500 2.500 6 8 C5.600 13 19.500 12.500 19 16 C18.600 18.800 9 18.500 1.600 15.500 L1.600 21 C9.500 24.500 23 24 23 17 C23 11.500 10 12 10.200 9 C10.400 6.800 18 7 24.400 9.500Z" fill="url(#sg)"/></svg>
<div class="a" style="left:605px;top:766px;width:40px;height:2px;background:#76b9ed"></div>
<!-- firefox -->
<svg class="a" style="left:661px;top:734px" width="26" height="27" viewBox="0 0 26 27"><defs><radialGradient id="ff1" cx=".6" cy=".2" r=".9"><stop offset="0" stop-color="#ffe14a"/><stop offset=".4" stop-color="#ff9a1f"/><stop offset=".8" stop-color="#f5373c"/><stop offset="1" stop-color="#e31587"/></radialGradient><radialGradient id="ff2" cx=".5" cy=".5" r=".5"><stop offset="0" stop-color="#9059ff"/><stop offset="1" stop-color="#5b2bb5"/></radialGradient></defs><path d="M16.500 .5 C19 3 19.500 5 19 6.500 C22.500 8 25 11.500 25 15.500 C25 21.500 19.500 26 13 26 C6.500 26 1 21.500 1 15.500 C1 12 2 9.500 3.500 8 C3.500 9 4 10 4.500 10.500 C5 8 7 6 9.500 5.500 C12 5 14 4.500 16.500 .5Z" fill="url(#ff1)"/><circle cx="13.500" cy="15.500" r="5.600" fill="url(#ff2)"/><path d="M7 13 C8 10 11 9 13 10 C11 10.500 10 12 10.500 13.500 C8.500 14 7.500 14 7 13Z" fill="#ffbd2e"/></svg>
<div class="a" style="left:654px;top:766px;width:40px;height:2px;background:#76b9ed"></div>
<!-- chrome (active) -->
<div class="a" style="left:699px;top:728px;width:48px;height:40px;background:#4b4b4d"></div>
<div class="a" style="left:699px;top:766px;width:48px;height:2px;background:#76b9ed"></div>
<svg class="a" style="left:710px;top:735px" width="30" height="30" viewBox="0 0 30 30"><defs><clipPath id="cpb"><circle cx="19.500" cy="19.200" r="7.600"/></clipPath></defs><circle cx="12" cy="11.500" r="11" fill="#fff"/><path d="M12 .5 A11 11 0 0 1 21.530 6 H12 A5.500 5.500 0 0 0 7.240 8.750 L2.470 6 A11 11 0 0 1 12 .5Z" fill="#ea4335"/><path d="M21.530 6 A11 11 0 0 1 12 22.500 L16.760 14.250 A5.500 5.500 0 0 0 16.760 8.750 L12 6Z" fill="#fbbc04"/><path d="M12 22.500 A11 11 0 0 1 2.470 6 L7.240 14.250 A5.500 5.500 0 0 0 12 17 L16.760 14.250Z" fill="#34a853"/><circle cx="12" cy="11.500" r="5.200" fill="#fff"/><circle cx="12" cy="11.500" r="4.200" fill="#4285f4"/><g clip-path="url(#cpb)"><rect x="11" y="11" width="17" height="17" fill="#9a9c94"/><rect x="11" y="11" width="17" height="7" fill="#55604f"/><path d="M16 28 L16.800 21 C17.200 19.500 21.800 19.500 22.200 21 L23 28Z" fill="#f1efeb"/><circle cx="19.500" cy="18" r="1.900" fill="#7e5f4d"/><path d="M17.600 17.500 a1.900 1.900 0 0 1 3.800 0z" fill="#26221f"/></g></svg>
<!-- anydesk -->
<svg class="a" style="left:759px;top:735px" width="26" height="26" viewBox="0 0 26 26"><rect x="1" y="1" width="24" height="24" fill="#ef443b"/><path d="M10 7.500 L15.500 13 L10 18.500 L4.500 13Z" fill="#fff"/><path d="M14 7.300 L15.800 5.500 L23.300 13 L15.800 20.500 L14 18.700 L19.700 13Z" fill="#fff"/></svg>
<!-- tray -->
<svg class="a" style="left:1170px;top:742px" width="14" height="9" viewBox="0 0 14 9"><path d="M1 7.800 L7 1.800 L13 7.800" fill="none" stroke="#fff" stroke-width="1.300"/></svg>
<svg class="a" style="left:1192px;top:739px" width="18" height="16" viewBox="0 0 18 16"><path d="M1 5.500 H3.800 L7.300 2 V14 L3.800 10.500 H1Z" fill="none" stroke="#fff" stroke-width="1.100" stroke-linejoin="round"/><path d="M9.500 5.500 C10.600 6.800 10.600 9.200 9.500 10.500 M11.800 3.800 C13.800 6 13.800 10 11.800 12.200 M14.100 2 C17 5.200 17 10.800 14.100 14" fill="none" stroke="#fff" stroke-width="1.100"/></svg>
<svg class="a" style="left:1218px;top:740px" width="17" height="16" viewBox="0 0 17 16"><path d="M2 14 C2 8 7 3.500 13.500 3.500 M5.500 14 C5.500 10 9 7 13.500 7 M9 14 C9 12 11 10.400 13.500 10.400" fill="none" stroke="#fff" stroke-width="1.300"/><circle cx="13" cy="13.600" r="1.300" fill="#fff"/></svg>
<svg class="a" style="left:1241px;top:738px" width="17" height="19" viewBox="0 0 17 19"><rect x="1.500" y="5.500" width="8.500" height="8" rx="1.500" fill="none" stroke="#fff" stroke-width="1.200"/><path d="M10.500 8.500 L14.500 6.500 V12.500 L10.500 10.500" fill="none" stroke="#fff" stroke-width="1.200" stroke-linejoin="round"/><path d="M3.500 2.500 C6 .5 10 .5 12.500 2.500 M3.500 16.500 C6 18.500 10 18.500 12.500 16.500" fill="none" stroke="#fff" stroke-width="1.100"/></svg>
<span id="tm" class="t" style="left:1271px;top:733px;color:#fff;letter-spacing:-0.386px;font-size:12.0px">6:23 PM</span>
<span id="dt" class="t" style="left:1267px;top:751px;color:#fff;letter-spacing:-0.266px;font-size:12.0px">1/12/2026</span>
<svg class="a" style="left:1335px;top:736px" width="28" height="30" viewBox="0 0 28 30"><path d="M2 3.800 H18.400 V16.400 H8.500 L5.400 19.600 V16.400 H2Z" fill="#fff"/><path d="M4.500 7 H16 M4.500 9.700 H16 M4.500 12.400 H16" stroke="#242326" stroke-width="1.100"/><circle cx="17.300" cy="19.600" r="7.700" fill="#343434" stroke="#9a9a9a" stroke-width="1"/><text x="17.300" y="24.300" text-anchor="middle" font-family="Liberation Sans,sans-serif" font-size="12.500" font-weight="bold" fill="#fff">1</text></svg>
<div class="a" style="left:1373px;top:728px;width:1px;height:40px;background:#6a6a6a"></div>
<!--/TASK-->
</body>
</html>
